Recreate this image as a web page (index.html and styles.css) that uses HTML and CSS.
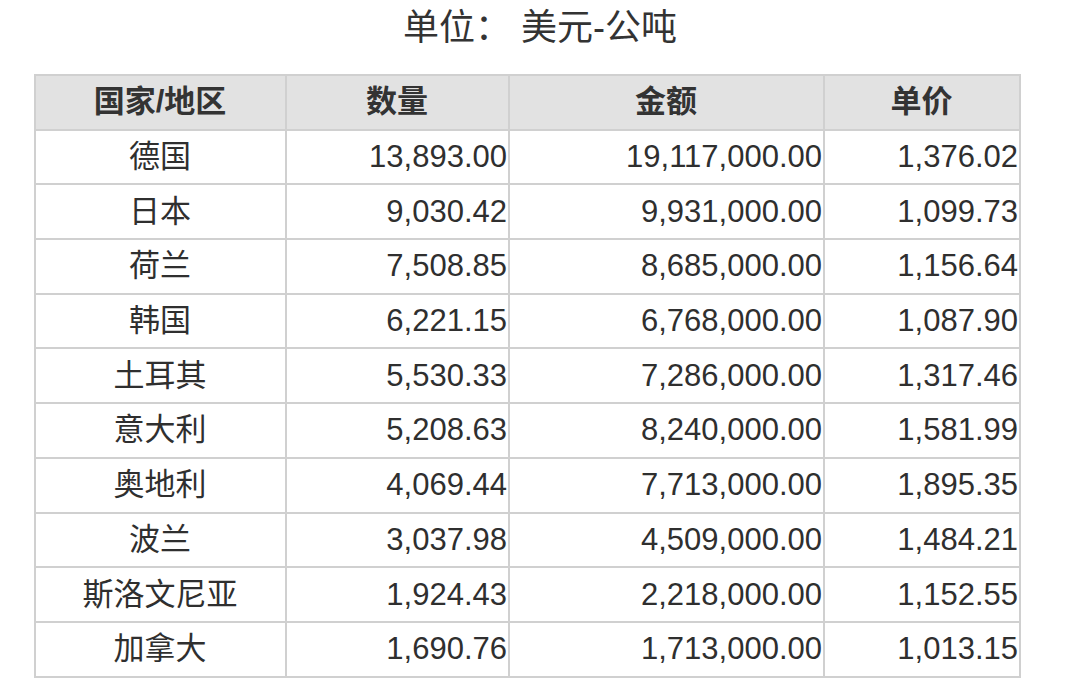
FILE: index.html
```html
<!DOCTYPE html>
<html lang="zh">
<head>
<meta charset="utf-8">
<link rel="stylesheet" href="styles.css">
</head>
<body>
<div class="page">
  <div class="title">单位：&nbsp;美元-公吨</div>
  <table class="data">
    <colgroup>
      <col class="c1"><col class="c2"><col class="c3"><col class="c4">
    </colgroup>
    <thead>
      <tr><th>国家/地区</th><th>数量</th><th>金额</th><th>单价</th></tr>
    </thead>
    <tbody>
      <tr><td class="name">德国</td><td>13,893.00</td><td>19,117,000.00</td><td>1,376.02</td></tr>
      <tr><td class="name">日本</td><td>9,030.42</td><td>9,931,000.00</td><td>1,099.73</td></tr>
      <tr><td class="name">荷兰</td><td>7,508.85</td><td>8,685,000.00</td><td>1,156.64</td></tr>
      <tr><td class="name">韩国</td><td>6,221.15</td><td>6,768,000.00</td><td>1,087.90</td></tr>
      <tr><td class="name">土耳其</td><td>5,530.33</td><td>7,286,000.00</td><td>1,317.46</td></tr>
      <tr><td class="name">意大利</td><td>5,208.63</td><td>8,240,000.00</td><td>1,581.99</td></tr>
      <tr><td class="name">奥地利</td><td>4,069.44</td><td>7,713,000.00</td><td>1,895.35</td></tr>
      <tr><td class="name">波兰</td><td>3,037.98</td><td>4,509,000.00</td><td>1,484.21</td></tr>
      <tr><td class="name">斯洛文尼亚</td><td>1,924.43</td><td>2,218,000.00</td><td>1,152.55</td></tr>
      <tr><td class="name">加拿大</td><td>1,690.76</td><td>1,713,000.00</td><td>1,013.15</td></tr>
    </tbody>
  </table>
</div>
</body>
</html>
```

FILE: styles.css
```css
html, body {
  margin: 0;
  padding: 0;
  background: #ffffff;
}
body {
  font-family: "Liberation Sans", "Noto Sans CJK SC", sans-serif;
  color: #2f2f2f;
}
.page {
  width: 1080px;
  height: 693px;
  overflow: hidden;
}
.title {
  height: 74px;
  font-size: 36px;
  line-height: 56px;
  text-align: center;
  color: #333;
}
.data {
  margin-left: 34px;
  border-collapse: collapse;
  table-layout: fixed;
  width: 985px;
  font-size: 31px;
}
.c1 { width: 251px; }
.c2 { width: 223px; }
.c3 { width: 315px; }
.c4 { width: 196px; }
.data th, .data td {
  border: 2px solid #d0d0d0;
  height: 52.7px;
  padding: 0 1px 0 0;
  line-height: 52px;
  white-space: nowrap;
}
.data th {
  background: #e2e2e2;
  font-weight: bold;
  text-align: center;
  color: #333;
  font-size: 31px;
}
.data td {
  text-align: right;
}
.data td.name {
  text-align: center;
}
```
